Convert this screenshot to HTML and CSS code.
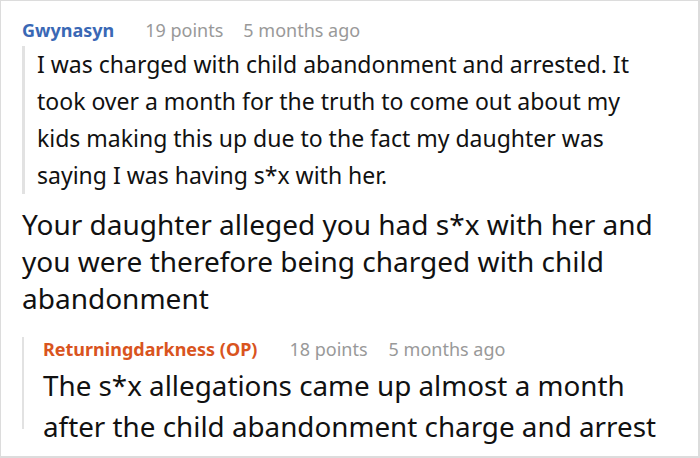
FILE: index.html
```html
<!DOCTYPE html>
<html>
<head>
<meta charset="utf-8">
<link rel="stylesheet" href="styles.css">
</head>
<body>
<div class="frame">
  <div class="comment">
    <div class="meta">
      <span class="name name-blue">Gwynasyn</span>
      <span class="points">19 points</span>
      <span class="time">5 months ago</span>
    </div>
    <div class="quote">I was charged with child abandonment and arrested. It took over a month for the truth to come out about my kids making this up due to the fact my daughter was saying I was having s*x with her.</div>
  </div>
  <div class="big-text">Your daughter alleged you had s*x with her and you were therefore being charged with child abandonment</div>
  <div class="reply">
    <div class="meta meta-reply">
      <span class="name name-orange">Returningdarkness (OP)</span>
      <span class="points">18 points</span>
      <span class="time">5 months ago</span>
    </div>
    <div class="reply-text">The s*x allegations came up almost a month after the child abandonment charge and arrest</div>
  </div>
</div>
</body>
</html>
```

FILE: styles.css
```css
html, body {
  margin: 0;
  padding: 0;
  background: #fff;
}
.frame {
  box-sizing: border-box;
  width: 700px;
  height: 458px;
  border: 1px solid #dcdcdc;
  border-right-width: 2px;
  border-bottom-width: 2px;
  overflow: hidden;
  font-family: "Noto Sans", "Open Sans", sans-serif;
  color: #111;
  padding: 17px 0 0 21px;
}
.meta {
  display: flex;
  align-items: baseline;
  font-size: 18px;
  line-height: 24px;
}
.name {
  font-weight: 700;
  margin-right: 31px;
}
.name-blue { color: #3a68b5; }
.name-orange { color: #d9541e; }
.points, .time {
  color: #999;
}
.points { margin-right: 20px; }
.quote {
  margin-top: 4px;
  border-left: 3px solid #e2e2e2;
  padding-left: 12px;
  font-size: 23px;
  line-height: 37px;
  width: 610px;
}
.big-text {
  margin-top: 12px;
  font-size: 28px;
  line-height: 37px;
  width: 660px;
}
.reply {
  margin-top: 30px;
  height: 92px;
  border-left: 2px solid #e2e2e2;
  padding-left: 19px;
}
.meta-reply {
  margin-top: -10px;
}
.meta-reply .name {
  margin-right: 32px;
}
.meta-reply .points {
  margin-right: 21px;
}
.reply-text {
  margin-top: 4px;
  font-size: 27.8px;
  line-height: 41px;
  width: 645px;
}
```
